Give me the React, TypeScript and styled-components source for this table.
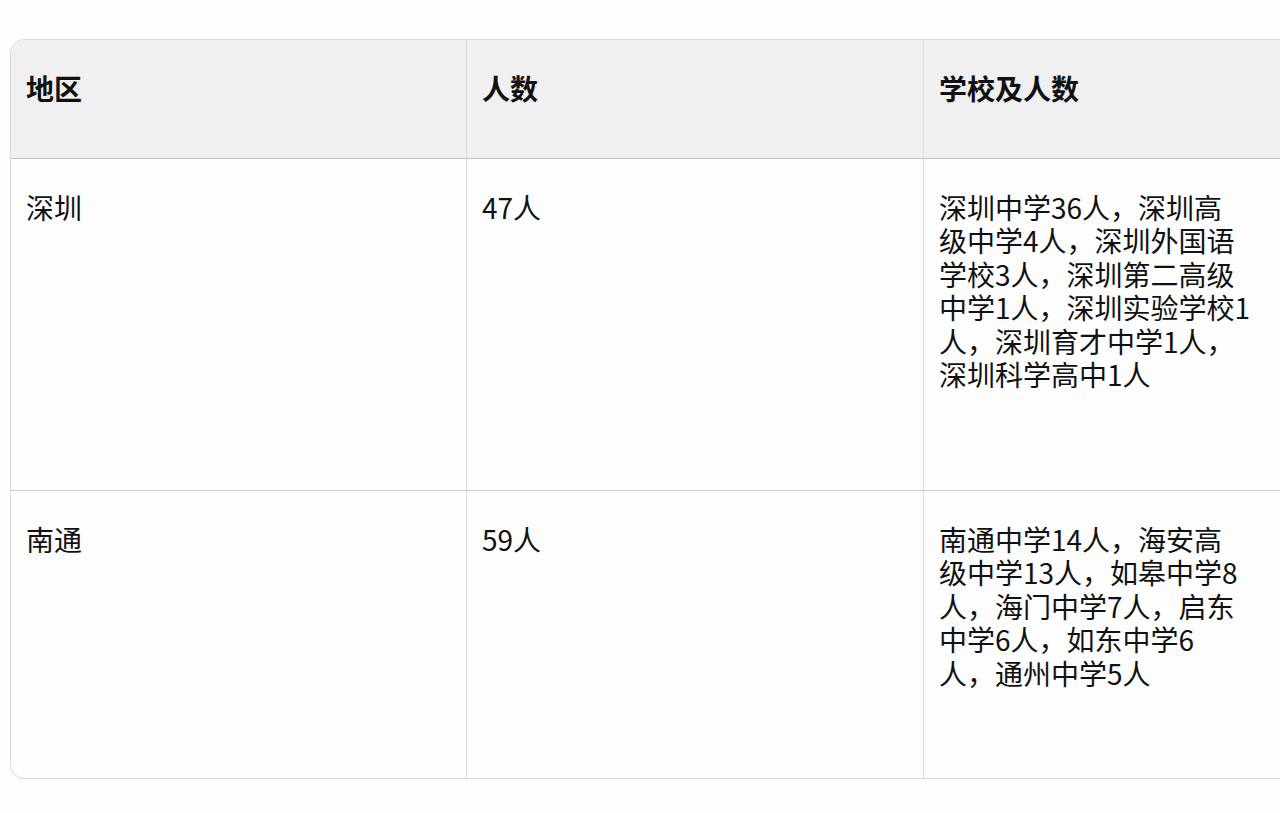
import * as React from 'react';
import styled, { createGlobalStyle } from 'styled-components';

const GlobalStyle = createGlobalStyle`
  html, body {
    margin: 0;
    padding: 0;
    background: #fdfdfd;
    overflow: hidden;
  }
  body {
    font-family: "Noto Sans CJK SC", "Noto Sans", sans-serif;
    color: #111111;
  }
`;

const StyledPage = styled.div`
  width: 1280px;
  height: 813px;
  padding: 39px 0 0 10px;
  box-sizing: border-box;
  overflow: hidden;
`;

const StyledTable = styled.div`
  display: grid;
  grid-template-columns: 456px 457px 457px;
  width: 1372px;
  border: 1px solid #d9d9d9;
  border-radius: 14px;
  overflow: hidden;
  background: #fdfdfd;
`;

const StyledCell = styled.div<{ $header?: boolean; $last?: boolean; $height: number }>`
  box-sizing: border-box;
  height: ${(p) => p.$height}px;
  padding: 32px 16px 0 15px;
  font-size: 28px;
  line-height: 33.4px;
  font-weight: ${(p) => (p.$header ? 700 : 400)};
  background: ${(p) => (p.$header ? '#f0f0f0' : 'transparent')};
  border-right: 1px solid #dcdcdc;
  border-bottom: ${(p) => (p.$last ? 'none' : p.$header ? '1.5px solid #c2c2c2' : '1.5px solid #cacaca')};
  color: #111111;
`;

const StyledLine = styled.span`
  display: block;
  white-space: nowrap;
`;

interface Row {
  region: string;
  count: string;
  schools: string[];
  height: number;
}

const ROWS: Row[] = [
  {
    region: '深圳',
    count: '47人',
    schools: [
      '深圳中学36人，深圳高',
      '级中学4人，深圳外国语',
      '学校3人，深圳第二高级',
      '中学1人，深圳实验学校1',
      '人，深圳育才中学1人，',
      '深圳科学高中1人',
    ],
    height: 332,
  },
  {
    region: '南通',
    count: '59人',
    schools: [
      '南通中学14人，海安高',
      '级中学13人，如皋中学8',
      '人，海门中学7人，启东',
      '中学6人，如东中学6',
      '人，通州中学5人',
    ],
    height: 287,
  },
];

export default function App() {
  return (
    <>
      <GlobalStyle />
      <StyledPage>
        <StyledTable>
          <StyledCell $header $height={119}>地区</StyledCell>
          <StyledCell $header $height={119}>人数</StyledCell>
          <StyledCell $header $height={119}>学校及人数</StyledCell>
          {ROWS.map((row, i) => {
            const last = i === ROWS.length - 1;
            return (
              <React.Fragment key={row.region}>
                <StyledCell $last={last} $height={row.height}>{row.region}</StyledCell>
                <StyledCell $last={last} $height={row.height}>{row.count}</StyledCell>
                <StyledCell $last={last} $height={row.height}>
                  {row.schools.map((line) => (
                    <StyledLine key={line}>{line}</StyledLine>
                  ))}
                </StyledCell>
              </React.Fragment>
            );
          })}
        </StyledTable>
      </StyledPage>
    </>
  );
}
